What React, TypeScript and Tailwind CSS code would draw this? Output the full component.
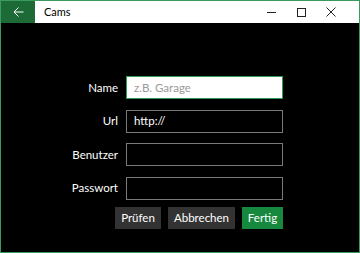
import React from 'react';

const font = { fontFamily: 'Lato, "Open Sans", sans-serif' };

function Field({ label, value, placeholder, active }: { label: string; value?: string; placeholder?: string; active?: boolean }) {
    return (
        <>
            <div className="flex items-center justify-end text-[11.5px] text-white">{label}</div>
            <div
                className={
                    active
                        ? 'flex h-[23px] items-center border border-[#2f9a55] bg-white px-[7px] text-[11.5px]'
                        : 'flex h-[23px] items-center border border-[#7a7a7a] bg-black px-[7px] text-[11.5px] text-white'
                }
            >
                {value ? value : <span className="text-[#9a9a9a]">{placeholder}</span>}
            </div>
        </>
    );
}

export default function App() {
    return (
        <div className="flex h-[253px] w-[360px] flex-col border border-[#3a9a60] bg-black" style={font}>
            {/* title bar */}
            <div className="flex h-[22px] items-center bg-white">
                <div className="flex h-full w-[34px] items-center justify-center bg-[#1c6a36]">
                    <svg width="11" height="10" viewBox="0 0 11 10" fill="none" stroke="white" strokeWidth="1">
                        <path d="M10.5 5H1M5.5 0.5L1 5l4.5 4.5" />
                    </svg>
                </div>
                <div className="ml-[9px] text-[11px] text-black">Cams</div>
                <div className="ml-auto flex h-full items-center">
                    <div className="flex w-[30px] justify-center">
                        <div className="h-px w-[9px] bg-[#222]" />
                    </div>
                    <div className="flex w-[30px] justify-center">
                        <div className="h-[9px] w-[9px] border border-[#222]" />
                    </div>
                    <div className="flex w-[30px] justify-center">
                        <svg width="10" height="10" viewBox="0 0 10 10" stroke="#222" strokeWidth="1">
                            <path d="M0.5 0.5l9 9M9.5 0.5l-9 9" />
                        </svg>
                    </div>
                    <div className="w-[13px]" />
                </div>
            </div>

            {/* form */}
            <div className="flex-1 pt-[53px]">
                <div className="grid grid-cols-[117px_157px] gap-x-[8px] gap-y-[10.5px]">
                    <Field label="Name" placeholder="z.B. Garage" active />
                    <Field label="Url" value="http://" />
                    <Field label="Benutzer" />
                    <Field label="Passwort" />
                </div>
                <div className="mt-[7px] flex w-[282px] justify-end gap-[7px] text-[11.5px] text-white">
                    <button className="h-[22px] w-[46px] bg-[#333333]">Prüfen</button>
                    <button className="h-[22px] w-[67px] bg-[#333333]">Abbrechen</button>
                    <button className="h-[22px] w-[41px] bg-[#17893f]">Fertig</button>
                </div>
            </div>
        </div>
    );
}
